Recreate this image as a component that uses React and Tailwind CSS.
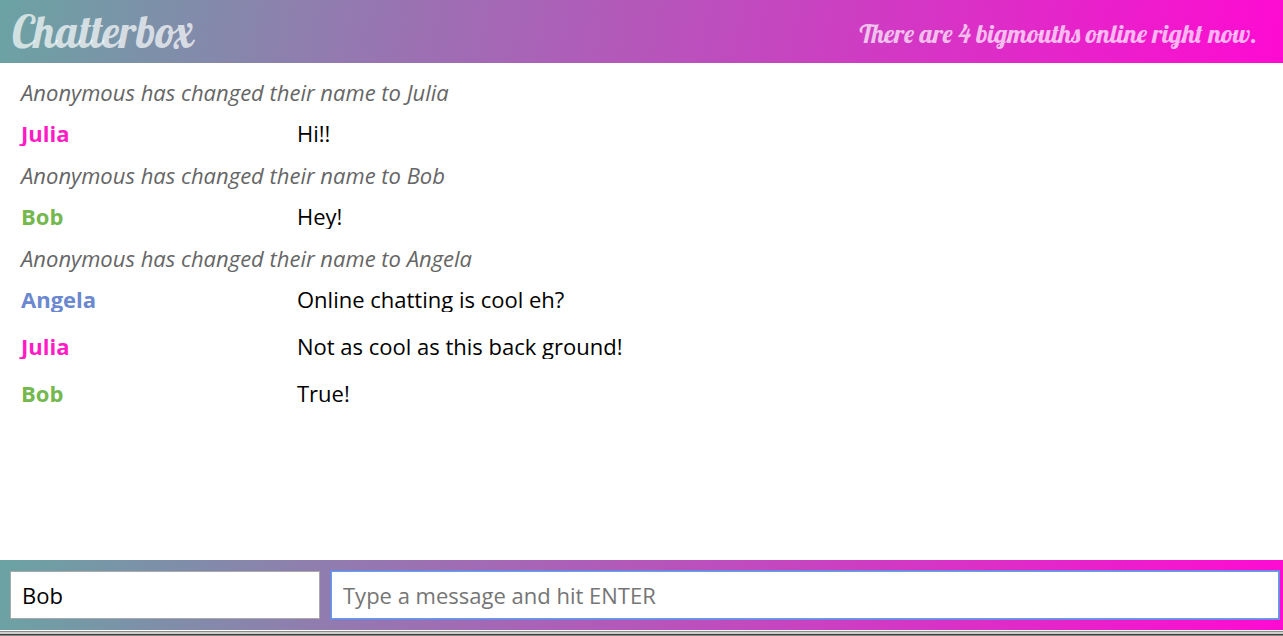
const entries = [
  { status: 'Anonymous has changed their name to Julia' },
  { name: 'Julia', color: 'text-[#ff1cc4]', text: 'Hi!!' },
  { status: 'Anonymous has changed their name to Bob' },
  { name: 'Bob', color: 'text-[#74b84e]', text: 'Hey!' },
  { status: 'Anonymous has changed their name to Angela' },
  { name: 'Angela', color: 'text-[#6b88d0]', text: 'Online chatting is cool eh?' },
  { name: 'Julia', color: 'text-[#ff1cc4]', text: 'Not as cool as this back ground!' },
  { name: 'Bob', color: 'text-[#74b84e]', text: 'True!' },
];

function Entry({ entry }) {
  if (entry.status) {
    return <li className="flex h-9 items-center italic text-[#666]">{entry.status}</li>;
  }
  return (
    <li className="flex h-[47px] items-start pt-[11px] leading-[25px]">
      <span className={`w-[276px] shrink-0 overflow-y-clip font-bold ${entry.color}`}>{entry.name}</span>
      <span className="min-w-0 flex-1 overflow-y-clip">{entry.text}</span>
    </li>
  );
}

export default function App() {
  return (
    <div className="flex min-h-screen flex-col bg-white font-['Open_Sans',sans-serif] text-[22px] text-black">
      <header className="flex h-[63px] items-center justify-between bg-linear-[100deg,#6ba3a3,#ff0ad2] pr-[26px] pl-3 font-['Lobster','Liberation_Serif',serif] text-white/70">
        <h1 className="text-[44px]">Chatterbox</h1>
        <p className="pt-1 text-[26px]">There are 4 bigmouths online right now.</p>
      </header>
      <main className="flex-1 px-[21px] pt-[11px]">
        <ul>
          {entries.map((entry, i) => (
            <Entry key={i} entry={entry} />
          ))}
        </ul>
      </main>
      <footer>
        <form className="flex h-[70px] items-center gap-[11px] bg-linear-[100deg,#6ba3a3,#ff0ad2] pr-1 pl-[10px]" onSubmit={(e) => e.preventDefault()}>
          <input
            aria-label="Your name"
            defaultValue="Bob"
            className="h-12 w-[310px] shrink-0 border border-[#a9a9a9] bg-white px-[11px] outline-none"
          />
          <input
            aria-label="Message"
            placeholder="Type a message and hit ENTER"
            className="h-12 min-w-0 flex-1 border border-[#6f9be0] bg-white px-[11px] outline-1 outline-[#6b88e8] placeholder:text-[#757575]"
          />
        </form>
        <div className="h-px bg-white" />
        <div className="h-px bg-[#8c8c8c]" />
        <div className="h-0.5 bg-[#cfcfcf]" />
        <div className="h-px bg-[#3c3c3c]" />
        <div className="h-px bg-[#8c8787]" />
      </footer>
    </div>
  );
}
